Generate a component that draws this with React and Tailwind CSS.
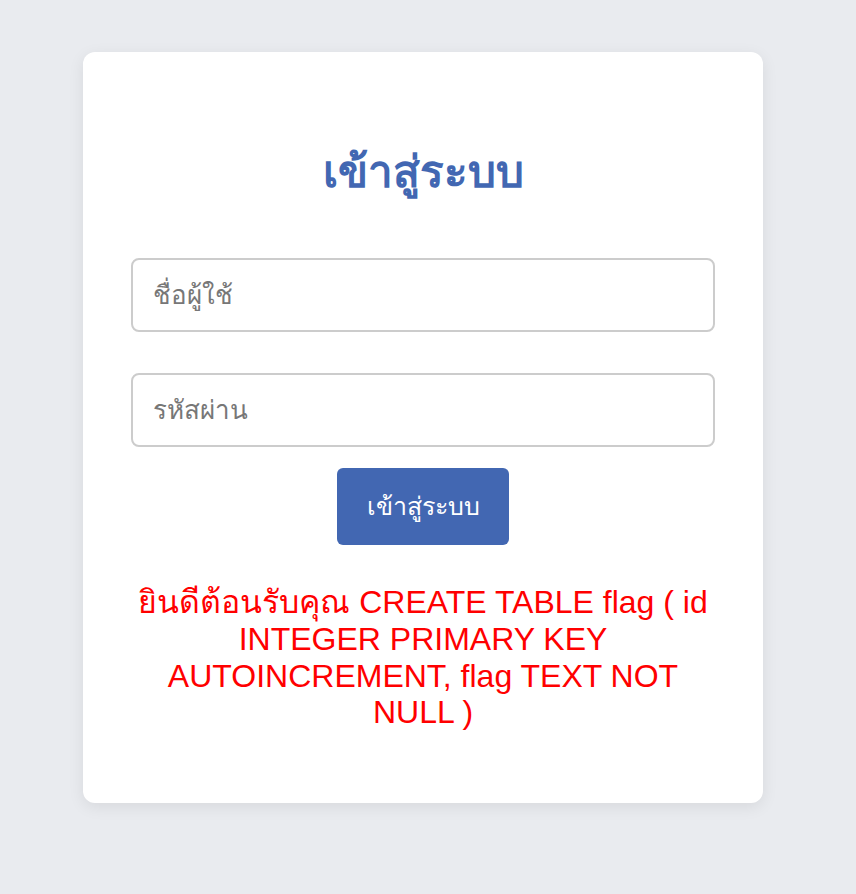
export default function App() {
  return (
    <div className="min-h-[894px] w-full bg-[#e9ebef] pt-[52px] pl-[83px]" style={{ fontFamily: '"Liberation Sans", Arial, sans-serif' }}>
      <div className="w-[680px] h-[751px] bg-white rounded-[12px] shadow-[0_4px_16px_rgba(0,0,0,0.08)] px-[48px] pt-[90px]">
        <h2 className="text-[44px] leading-[60px] font-bold text-[#4267b2] text-center">เข้าสู่ระบบ</h2>
        <form className="mt-[56px] flex flex-col items-center" onSubmit={(e) => e.preventDefault()}>
          <input
            type="text"
            placeholder="ชื่อผู้ใช้"
            className="w-full h-[74px] border-2 border-[#cccccc] rounded-[8px] px-[20px] text-[26px] text-gray-800 placeholder:text-[#777777] outline-none"
          />
          <input
            type="password"
            placeholder="รหัสผ่าน"
            className="w-full h-[74px] mt-[41px] border-2 border-[#cccccc] rounded-[8px] px-[20px] text-[26px] text-gray-800 placeholder:text-[#777777] outline-none"
          />
          <button
            type="submit"
            className="mt-[21px] w-[172px] h-[77px] bg-[#4267b2] text-white text-[25px] font-medium rounded-[6px]"
          >
            เข้าสู่ระบบ
          </button>
        </form>
        <p className="mt-[39px] text-[32px] leading-[36.8px] text-[#ff0000] text-center">
          ยินดีต้อนรับคุณ CREATE TABLE flag ( id INTEGER PRIMARY KEY AUTOINCREMENT, flag TEXT NOT NULL )
        </p>
      </div>
    </div>
  );
}
